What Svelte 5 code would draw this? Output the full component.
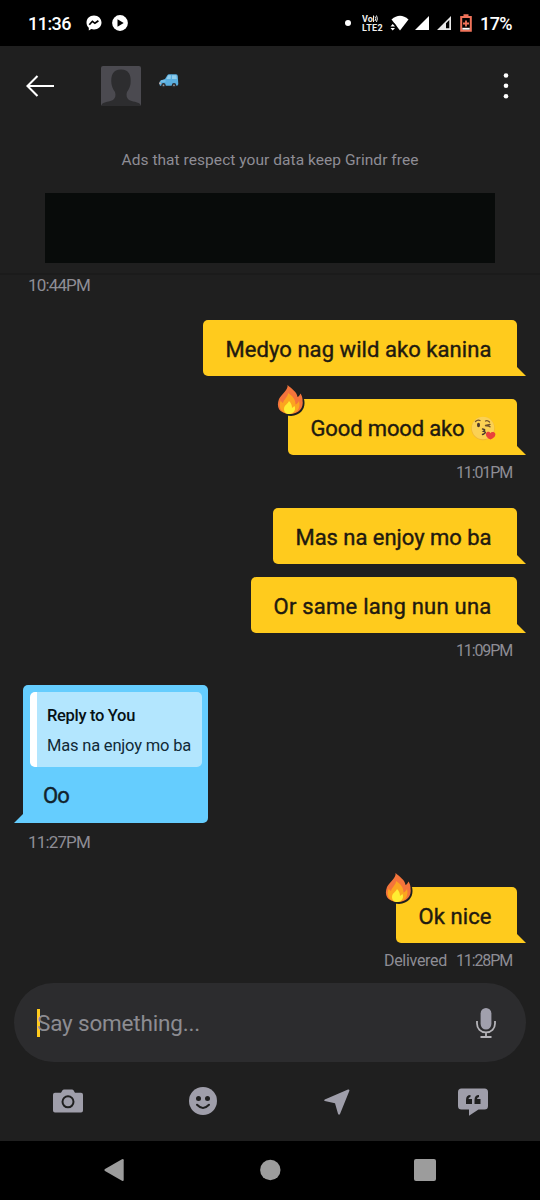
<script>
  const messages = [
    { id: 1, text: 'Medyo nag wild ako kanina', width: 266, top: 26 },
    { id: 2, text: 'Good mood ako', width: 154, top: 23, kiss: true, fire: true, time: '11:01PM' },
    { id: 3, text: 'Mas na enjoy mo ba', width: 196, top: 25 },
    { id: 4, text: 'Or same lang nun una', width: 218, top: 13, time: '11:09PM' },
    {
      id: 5,
      text: 'Oo',
      width: 26,
      top: 24,
      incoming: true,
      time: '11:27PM',
      reply: { title: 'Reply to You', text: 'Mas na enjoy mo ba' }
    },
    { id: 6, text: 'Ok nice', width: 73, top: 35, fire: true, time: '11:28PM', status: 'Delivered' }
  ];

  // Tracks a line of text out (or in) to a given width
  function fit(node, width) {
    const range = document.createRange();
    range.selectNodeContents(node);
    const natural = range.getBoundingClientRect().width;
    node.style.letterSpacing = `${(width - natural) / node.textContent.length}px`;
  }
</script>

{#snippet flame()}
  <svg class="flame" viewBox="0 0 30 32">
    <path d="M29 14c2 8-2 16-13 17-7 0-11-3-13-7l12-9z" fill="#1f1f1f" />
    <path d="M12.500 0c1 5-6 9-8.500 14-3 8 0 14 10 15 10 0 15-6 13.500-14 0-3-1-5-2-6.500-1 2-1.500 3-3 3.500C22 7 17 4 12.500 0z" fill="#f4743b" />
    <path d="M13 8c0 4-4 6-5 10-2-1-2-2-2-3-3 6-1 13 8 14 8 0 12-6 10-13-1 2-2 3-3.500 3.500 0-5-2.500-8-7.500-11.500z" fill="#fca51f" />
    <path d="M14 16c-1 3-5 4-5 8 0 3 2 5 5.500 5s7-4 5-8l-2.500 2c0-3-1-5-3-7z" fill="#ffed32" />
  </svg>
{/snippet}

<div class="phone">
  <div class="status">
    <span class="clock" use:fit={43}>11:36</span>
    <svg class="notif messenger" width="16" height="16" viewBox="0 0 16 16">
      <path d="M8 .4C3.600.4.5 3.500.5 7.500c0 2.100.8 3.900 2.300 5.200v2.700l2.500-1.300c.8.2 1.700.4 2.700.4 4.400 0 7.500-3.100 7.500-7S12.400.4 8 .4z" fill="#fff" />
      <path d="M3.300 9.700l3.100-3.400 2.500 2 3.500-2.600" fill="none" stroke="#000" stroke-width="1.700" />
    </svg>
    <svg class="notif" width="16" height="16" viewBox="0 0 16 16">
      <circle cx="8" cy="8" r="7.900" fill="#fff" />
      <path d="M5.500 4.200l6.200 3.800-6.200 3.800z" fill="#000" />
    </svg>
    <span class="grow"></span>
    <span class="dot"></span>
    <span class="volte">
      <span class="vo"><span use:fit={11}>Vo</span><svg width="5" height="8" viewBox="0 0 5 8"><path d="M.5.500v6.500M2 1.500q1.500 2 0 4.500M3.500.5q1.800 3 0 6.500" fill="none" stroke="#eee" stroke-width="1" /></svg></span>
      <span use:fit={21}>LTE2</span>
    </span>
    <svg class="wifi" width="19" height="17" viewBox="0 0 19 17">
      <path d="M1.500 4.500Q10 -3 18.500 4.500L10 15.500z" fill="#fff" />
      <path d="M0 8.500h4.700L6.500 11v6H0z" fill="#000" />
      <path d="M.5 11.500L2.700 9 5 11.500zM.5 13h4.500L2.700 15.500z" fill="#fff" />
    </svg>
    <svg class="signal" width="14" height="14" viewBox="0 0 14 14"><path d="M14 0v14H0z" fill="#fff" /></svg>
    <svg class="signal second" width="14" height="14" viewBox="0 0 14 14">
      <path d="M14 0v14H0zM12.300 4L9 7.300v5h3.300z" fill="#e8e8e8" fill-rule="evenodd" />
    </svg>
    <svg class="battery" width="12" height="18" viewBox="0 0 12 18">
      <path d="M3.500 1.200h5M1.200 3h9.600v13.800H1.200z" fill="none" stroke="#f0735a" stroke-width="2" />
      <path d="M6 6.500v6M3 9.500h6" stroke="#f0735a" stroke-width="1.800" />
      <path d="M2.300 13.800h7.400v1.900H2.300z" fill="#fff" />
    </svg>
    <span class="percent" use:fit={32}>17%</span>
  </div>

  <header>
    <div class="bar">
      <svg width="28" height="22" viewBox="0 0 28 22">
        <path d="M28 11H1.500M11.500 1L1.500 11l10 10" fill="none" stroke="#fff" stroke-width="2.100" />
      </svg>
      <svg class="avatar" width="40" height="40" viewBox="0 0 40 40">
        <rect width="40" height="40" rx="2" fill="#4b4a50" />
        <path d="M1 40v-2c2-2 8-2.500 11-4 2.500-2 3-5 2-8-2-3-3-5-3.500-8C9.500 9 12 3.500 20 3.500s10.500 5.500 9.500 14.500c-.5 3-1.500 5-3.500 8-1 3-.5 6 2 8 3 1.500 9 2 11 4v2z" fill="#2d2d2f" />
      </svg>
      <svg class="car" width="20" height="14" viewBox="0 0 20 14">
        <path d="M.5 8l1-1.500L6 5l2.500-4Q9 .3 10 .3h7q1.700 0 1.800 2l.5 8-1 1.500H1L.3 10z" fill="#5aaede" />
        <path d="M7.300 5l2-3.700H12L11.600 5zM13 1.300h4.300l.5 3.700H13z" fill="#8fcdec" />
        <path d="M2 7h4.500" stroke="#8bcdf0" />
        <circle cx="4.500" cy="11.300" r="2.200" fill="#292b30" />
        <circle cx="15" cy="11.300" r="2.200" fill="#292b30" />
        <circle cx="4.500" cy="11.300" r=".9" fill="#999" />
        <circle cx="15" cy="11.300" r=".9" fill="#999" />
        <path d="M.3 8.500h1.400V10H.3z" fill="#e8b09c" />
      </svg>
      <span class="grow"></span>
      <svg width="6" height="26" viewBox="0 0 6 26" fill="#fff">
        <circle cx="3" cy="2.500" r="2.300" /><circle cx="3" cy="12.800" r="2.300" /><circle cx="3" cy="23.200" r="2.300" />
      </svg>
    </div>
    <p class="ads"><span use:fit={297}>Ads that respect your data keep Grindr free</span></p>
    <div class="banner"></div>
  </header>

  <main>
    <div class="meta incoming first"><span use:fit={62}>10:44PM</span></div>
    {#each messages as message (message.id)}
      <div class="row" class:incoming={message.incoming} style="margin-top: {message.top}px">
        <div class="bubble" class:blue={message.incoming}>
          {#if message.fire}{@render flame()}{/if}
          {#if message.reply}
            <div class="reply">
              <strong use:fit={88}>{message.reply.title}</strong>
              <span use:fit={144}>{message.reply.text}</span>
            </div>
          {/if}
          <span class="text" use:fit={message.width}>{message.text}</span>
          {#if message.kiss}
            <svg class="kiss" width="25" height="25" viewBox="0 0 25 25">
              <circle cx="12" cy="12.500" r="11.700" fill="#f0b536" />
              <circle cx="12" cy="12" r="11.200" fill="#fbd154" />
              <ellipse cx="7.500" cy="9" rx="1.500" ry="2.200" fill="#4b382c" />
              <path d="M4.500 5.500q2-2 4.500-1M14.500 5q2-1 4 1M14.500 9.500l4.500-1.200M15 9.800q2.500-.3 4 1" fill="none" stroke="#70502b" stroke-width="1.300" stroke-linecap="round" />
              <path d="M11.500 13q4 .3 1 2.300 3.500.8.300 2.700l-1.300.5" fill="none" stroke="#4b382c" stroke-width="1.400" stroke-linecap="round" />
              <path d="M19.500 23.500c-3-1-5-3.500-4.500-6 .5-2 3.500-2.300 4.300-.2 1-2 4.500-1.800 5 .5.500 2.500-2 4.700-4.800 5.700z" fill="#e9413b" />
            </svg>
          {/if}
        </div>
      </div>
      {#if message.time}
        <div class="meta" class:incoming={message.incoming}>
          {#if message.status}<span use:fit={63}>{message.status}</span>{/if}
          <span use:fit={message.incoming ? 62 : 56}>{message.time}</span>
        </div>
      {/if}
    {/each}
  </main>

  <footer>
    <div class="composer">
      <span class="caret"></span>
      <span class="placeholder" use:fit={163}>Say something...</span>
      <span class="grow"></span>
      <svg width="20" height="30" viewBox="0 0 20 30">
        <rect x="4.600" width="10.800" height="21.500" rx="5.400" fill="#a1a0ad" />
        <path d="M1 13v2.500c0 5 3.500 8.800 9 8.800s9-3.800 9-8.800V13M10 24.500V29M4.500 29h11" fill="none" stroke="#b5b4b9" stroke-width="1.800" />
      </svg>
    </div>
    <div class="tools">
      <svg width="30" height="30" viewBox="0 0 30 30">
        <path d="M2 6.800h6l1.500-2.500q.5-.8 1.500-.8h8q1 0 1.500.8L22 6.800h6q2 0 2 2v15.700q0 2-2 2H2q-2 0-2-2V8.800q0-2 2-2z" fill="#9f9eaa" />
        <circle cx="15" cy="15.800" r="5.500" fill="none" stroke="#1f1f1f" stroke-width="2" />
      </svg>
      <svg width="30" height="30" viewBox="0 0 30 30">
        <circle cx="15" cy="15" r="14" fill="#9f9eaa" />
        <circle cx="10.500" cy="12.500" r="2.500" fill="#1f1f1f" />
        <circle cx="19.500" cy="12.500" r="2.500" fill="#1f1f1f" />
        <path d="M9 18.800q6 6.200 12 0" fill="none" stroke="#1f1f1f" stroke-width="2" stroke-linecap="round" />
      </svg>
      <svg width="30" height="30" viewBox="0 0 30 30">
        <path d="M1.800 13.500L25 3.500q2-.5 1.300 1.500L17 28q-1 1.500-2-.2l-3-10.500L1.800 15q-1.500-.7 0-1.500z" fill="#9f9eaa" />
      </svg>
      <svg width="30" height="30" viewBox="0 0 30 30">
        <path d="M3.500 2.500h23Q30 2.500 30 6v14q0 3.500-3.500 3.500h-6L11 29.700v-6.200H3.500Q0 23.500 0 20V6q0-3.500 3.500-3.500z" fill="#9f9eaa" />
        <path d="M8 18v-4q0-5 4.500-5v2q-2 .5-2 2H14v5zM16.500 18v-4q0-5 4.500-5v2q-2 .5-2 2h3.500v5z" fill="#1f1f1f" />
      </svg>
    </div>
  </footer>

  <nav>
    <svg width="22" height="24" viewBox="0 0 22 24"><path d="M2 11L19 1.200q1.700-.8 1.700 1v19.600q0 1.800-1.700 1L2 13q-1.500-1 0-2z" fill="#9c9c9c" /></svg>
    <svg width="22" height="22" viewBox="0 0 22 22"><circle cx="11.300" cy="11" r="10.200" fill="#9c9c9c" /></svg>
    <svg width="22" height="22" viewBox="0 0 22 22"><rect width="22" height="22" rx="2" fill="#9c9c9c" /></svg>
  </nav>
</div>

<style>
  :global(body) {
    margin: 0;
    background: #1f1f1f;
  }

  .phone {
    display: flex;
    flex-direction: column;
    width: 540px;
    height: 1200px;
    overflow: hidden;
    background: #1f1f1f;
    font-family: Roboto, sans-serif;
    color: #1f1a10;
  }

  svg {
    display: block;
    flex: none;
  }

  span,
  strong {
    white-space: nowrap;
  }

  .grow {
    flex: 1;
  }

  .status {
    display: flex;
    align-items: center;
    box-sizing: border-box;
    height: 46px;
    padding: 0 28px;
    background: #000;
    color: #fff;
    font-size: 18px;
    font-weight: 500;
  }

  .clock {
    padding-top: 1px;
  }

  .percent {
    padding-top: 1px;
    margin-left: 8px;
  }

  .notif {
    margin-left: 10px;
  }

  .messenger {
    margin-left: 15px;
  }

  .dot {
    width: 6px;
    height: 6px;
    border-radius: 50%;
    background: #fff;
  }

  .volte {
    display: flex;
    flex-direction: column;
    gap: 1px;
    margin-left: 11px;
    width: 21px;
    color: #eee;
    font-size: 9px;
    font-weight: 700;
    line-height: 8px;
  }

  .volte > span {
    height: 8px;
    overflow: hidden;
  }

  .vo {
    display: flex;
  }

  .wifi {
    margin-left: 7px;
  }

  .signal {
    margin-left: 6px;
  }

  .second {
    margin-left: 8px;
  }

  .battery {
    margin-left: 9px;
  }

  header {
    height: 229px;
    border-bottom: 2px solid #1b1b1b;
    box-sizing: border-box;
  }

  .bar {
    display: flex;
    align-items: center;
    height: 79px;
    padding: 0 31px 0 26px;
  }

  .avatar {
    margin-left: 47px;
  }

  .car {
    margin: 0 0 9px 18px;
  }

  .ads {
    display: flex;
    justify-content: center;
    margin: 25px 0 23px;
    color: #8e8d95;
    font-size: 15.5px;
    line-height: 20px;
  }

  .banner {
    height: 70px;
    margin: 0 45px;
    background: #080b0a;
  }

  main {
    flex: 1;
  }

  .row {
    display: flex;
    justify-content: flex-end;
    padding: 0 23px;
  }

  .row.incoming {
    justify-content: flex-start;
  }

  .bubble {
    position: relative;
    display: flex;
    align-items: center;
    box-sizing: border-box;
    height: 56px;
    padding: 2px 25.5px 0 22.5px;
    border-radius: 5px 5px 0 5px;
    background: #ffcb1d;
    font-size: 22px;
  }

  /* Sits between regular and medium */
  .text {
    -webkit-text-stroke: 0.4px currentColor;
  }

  .bubble::after {
    content: '';
    position: absolute;
    right: -9px;
    bottom: 0;
    width: 9px;
    height: 9px;
    background: #ffcb1d;
    clip-path: polygon(0 0, 100% 100%, 0 100%);
  }

  .bubble.blue {
    flex-direction: column;
    align-items: flex-start;
    width: 185px;
    height: 138px;
    padding: 7px;
    border-radius: 5px 5px 5px 0;
    background: #65cdfe;
    color: #12232c;
  }

  .bubble.blue::after {
    right: auto;
    left: -9px;
    background: #65cdfe;
    clip-path: polygon(100% 0, 100% 100%, 0 100%);
  }

  .blue .text {
    margin: 16px 0 0 13px;
    line-height: 26px;
  }

  .reply {
    display: flex;
    flex-direction: column;
    box-sizing: border-box;
    width: 172px;
    height: 75px;
    padding: 14px 0 0 10px;
    border-left: 7px solid #fff;
    border-radius: 5px;
    background: #b3e6fe;
    color: #112a36;
    font-size: 16.5px;
    font-weight: 400;
    line-height: 20px;
  }

  .reply strong {
    margin-bottom: 10px;
    color: #061116;
    font-weight: 500;
  }

  .flame {
    position: absolute;
    left: -13px;
    top: -14px;
    width: 30px;
    height: 32px;
  }

  .kiss {
    margin: 0 -4px 0 6px;
  }

  .meta {
    display: flex;
    justify-content: flex-end;
    gap: 9px;
    height: 20px;
    padding: 8px 28px 0;
    color: #8e8d95;
    font-size: 16px;
    line-height: 20px;
  }

  .meta.incoming {
    justify-content: flex-start;
    padding-top: 9px;
    font-size: 17px;
  }

  .meta.first {
    padding-top: 0;
    height: 19px;
  }

  .composer {
    display: flex;
    align-items: center;
    box-sizing: border-box;
    height: 79px;
    margin: 0 14px;
    padding: 0 30px 0 23px;
    border-radius: 40px;
    background: #2c2c2e;
  }

  .caret {
    width: 3px;
    height: 28px;
    margin-right: -3px;
    background: #ffcb1d;
  }

  .placeholder {
    color: #8c8c92;
    font-size: 22.5px;
    font-weight: 400;
  }

  .tools {
    display: flex;
    justify-content: space-between;
    align-items: center;
    box-sizing: border-box;
    height: 79px;
    padding: 0 52px 1px 53px;
  }

  nav {
    display: flex;
    justify-content: space-between;
    align-items: center;
    box-sizing: border-box;
    height: 59px;
    padding: 0 104px 1px 103px;
    background: #000;
  }
</style>
